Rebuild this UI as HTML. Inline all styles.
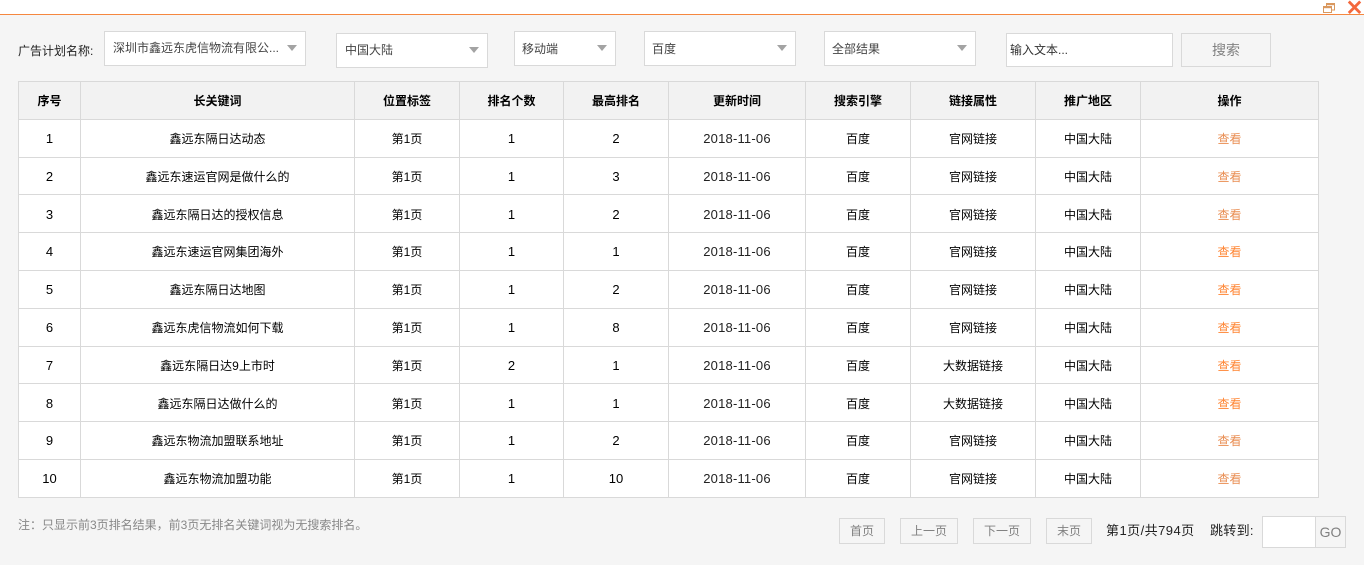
<!DOCTYPE html>
<html lang="zh-CN">
<head>
<meta charset="utf-8">
<title>长关键词</title>
<style>
html,body{margin:0;padding:0}
body{width:1364px;height:565px;position:relative;overflow:hidden;background:#f5f5f5;font-family:"Liberation Sans","Noto Sans CJK SC",sans-serif;font-size:12px;color:#222}
.top{position:absolute;left:0;top:0;width:1364px;height:14px;background:#fff;border-bottom:1px solid #f5873f}
.box{position:absolute;box-sizing:border-box;background:#fff;border:1px solid #d9d9d9;color:#444;font-size:12px}
.sel span{position:absolute;left:7px;top:0;white-space:nowrap}
.tri{position:absolute;width:0;height:0;border-left:5px solid transparent;border-right:5px solid transparent;border-top:6px solid #a3a3a3}
.abs{position:absolute;white-space:nowrap}
.btn{position:absolute;box-sizing:border-box;border:1px solid #d9d9d9;background:#f5f5f5;color:#808080;text-align:center}
.tw{position:absolute;left:18px;top:81px;border-left:1px solid #d9d9d9;border-top:1px solid #d9d9d9}
table{border-collapse:separate;border-spacing:0;table-layout:fixed;width:1300px;background:#fff}
td,th{box-sizing:border-box;padding:0;border-right:1px solid #d9d9d9;border-bottom:1px solid #d9d9d9;text-align:center;font-size:12px;color:#000;font-weight:normal;overflow:hidden;white-space:nowrap}
th{background:#f2f2f2;font-weight:bold;color:#000}
tr{height:38px}
tr.s{height:37px}
tr.d td{padding-top:2px}
td.n{font-size:13px}
td.t{font-size:13px;letter-spacing:.2px;color:#222}
a{color:#ff8533;text-decoration:none}
a.v{color:#e98d52}
</style>
</head>
<body>
<div class="top"></div>
<svg class="abs" style="left:1320px;top:0" width="44" height="16" viewBox="0 0 44 16">
<g fill="none" stroke="#d9985f" stroke-width="1">
<path d="M6.500 6V3.500h8v6.500h-3"/><path d="M6.500 4.500h8" stroke-width="1.400"/>
<rect x="3.500" y="6.500" width="8" height="6" fill="#fff"/>
<path d="M3.500 7.500h8" stroke-width="1.400"/>
</g>
<path d="M28.800 1.500L40.200 13M40.200 1.500L28.800 13" stroke="#f4683c" stroke-width="2.800" fill="none"/>
</svg>

<div class="abs" style="left:18px;top:43px;line-height:17px;color:#222">广告计划名称:</div>

<div class="box sel" style="left:104px;top:31px;width:202px;height:35px;line-height:33px"><span style="left:8px">深圳市鑫远东虎信物流有限公...</span></div>
<div class="tri" style="left:287px;top:45px"></div>
<div class="box sel" style="left:336px;top:33px;width:152px;height:35px;line-height:33px"><span style="left:8px">中国大陆</span></div>
<div class="tri" style="left:469px;top:47px"></div>
<div class="box sel" style="left:514px;top:31px;width:102px;height:35px;line-height:35px"><span>移动端</span></div>
<div class="tri" style="left:597px;top:45px"></div>
<div class="box sel" style="left:644px;top:31px;width:152px;height:35px;line-height:35px"><span>百度</span></div>
<div class="tri" style="left:777px;top:45px"></div>
<div class="box sel" style="left:824px;top:31px;width:152px;height:35px;line-height:35px"><span>全部结果</span></div>
<div class="tri" style="left:957px;top:45px"></div>
<div class="box" style="left:1006px;top:33px;width:167px;height:34px;line-height:33px;padding-left:3px;color:#333">输入文本...</div>
<div class="btn" style="left:1181px;top:33px;width:90px;height:34px;line-height:33px;font-size:14px">搜索</div>

<div class="tw">
<table>
<colgroup><col style="width:62px"><col style="width:274px"><col style="width:105px"><col style="width:104px"><col style="width:105px"><col style="width:137px"><col style="width:105px"><col style="width:125px"><col style="width:105px"><col style="width:178px"></colgroup>
<tr><th>序号</th><th>长关键词</th><th>位置标签</th><th>排名个数</th><th>最高排名</th><th>更新时间</th><th>搜索引擎</th><th>链接属性</th><th>推广地区</th><th>操作</th></tr>
<tr><td class="n">1</td><td>鑫远东隔日达动态</td><td>第1页</td><td class="n">1</td><td class="n">2</td><td class="t">2018-11-06</td><td>百度</td><td>官网链接</td><td>中国大陆</td><td><a class="v">查看</a></td></tr>
<tr class="s"><td class="n">2</td><td>鑫远东速运官网是做什么的</td><td>第1页</td><td class="n">1</td><td class="n">3</td><td class="t">2018-11-06</td><td>百度</td><td>官网链接</td><td>中国大陆</td><td><a class="v">查看</a></td></tr>
<tr class="d"><td class="n">3</td><td>鑫远东隔日达的授权信息</td><td>第1页</td><td class="n">1</td><td class="n">2</td><td class="t">2018-11-06</td><td>百度</td><td>官网链接</td><td>中国大陆</td><td><a class="v">查看</a></td></tr>
<tr><td class="n">4</td><td>鑫远东速运官网集团海外</td><td>第1页</td><td class="n">1</td><td class="n">1</td><td class="t">2018-11-06</td><td>百度</td><td>官网链接</td><td>中国大陆</td><td><a>查看</a></td></tr>
<tr><td class="n">5</td><td>鑫远东隔日达地图</td><td>第1页</td><td class="n">1</td><td class="n">2</td><td class="t">2018-11-06</td><td>百度</td><td>官网链接</td><td>中国大陆</td><td><a>查看</a></td></tr>
<tr><td class="n">6</td><td>鑫远东虎信物流如何下载</td><td>第1页</td><td class="n">1</td><td class="n">8</td><td class="t">2018-11-06</td><td>百度</td><td>官网链接</td><td>中国大陆</td><td><a>查看</a></td></tr>
<tr class="s"><td class="n">7</td><td>鑫远东隔日达9上市时</td><td>第1页</td><td class="n">2</td><td class="n">1</td><td class="t">2018-11-06</td><td>百度</td><td>大数据链接</td><td>中国大陆</td><td><a>查看</a></td></tr>
<tr class="d"><td class="n">8</td><td>鑫远东隔日达做什么的</td><td>第1页</td><td class="n">1</td><td class="n">1</td><td class="t">2018-11-06</td><td>百度</td><td>大数据链接</td><td>中国大陆</td><td><a>查看</a></td></tr>
<tr><td class="n">9</td><td>鑫远东物流加盟联系地址</td><td>第1页</td><td class="n">1</td><td class="n">2</td><td class="t">2018-11-06</td><td>百度</td><td>官网链接</td><td>中国大陆</td><td><a class="v">查看</a></td></tr>
<tr><td class="n">10</td><td>鑫远东物流加盟功能</td><td>第1页</td><td class="n">1</td><td class="n">10</td><td class="t">2018-11-06</td><td>百度</td><td>官网链接</td><td>中国大陆</td><td><a class="v">查看</a></td></tr>
</table>
</div>

<div class="abs" style="left:18px;top:517px;line-height:17px;color:#888">注&#xFF1A;只显示前3页排名结果&#xFF0C;前3页无排名关键词视为无搜索排名。</div>

<div class="btn" style="left:839px;top:518px;width:46px;height:26px;line-height:25px">首页</div>
<div class="btn" style="left:900px;top:518px;width:58px;height:26px;line-height:25px">上一页</div>
<div class="btn" style="left:973px;top:518px;width:58px;height:26px;line-height:25px">下一页</div>
<div class="btn" style="left:1046px;top:518px;width:46px;height:26px;line-height:25px">末页</div>
<div class="abs" style="left:1106px;top:522px;line-height:17px;font-size:13px;letter-spacing:.45px;color:#222">第1页/共794页</div>
<div class="abs" style="left:1210px;top:522px;line-height:17px;font-size:13px;letter-spacing:.3px;color:#222">跳转到:</div>
<div class="box" style="left:1262px;top:516px;width:54px;height:32px"></div>
<div class="btn" style="left:1315px;top:516px;width:31px;height:32px;line-height:31px;font-size:14px">GO</div>
</body>
</html>
